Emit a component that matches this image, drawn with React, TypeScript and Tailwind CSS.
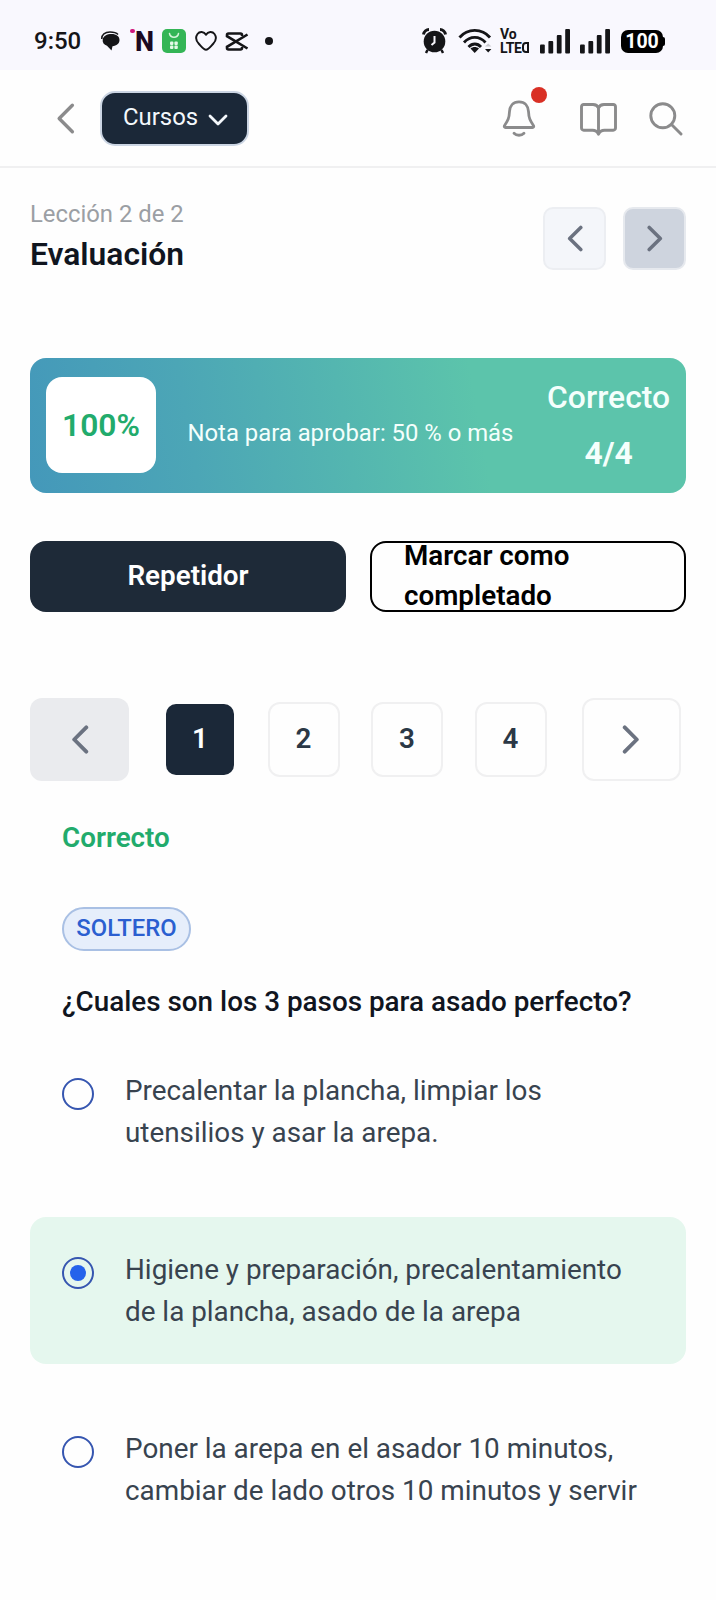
import clsx from 'clsx'

const options = [
  { id: 1, lines: ['Precalentar la plancha, limpiar los', 'utensilios y asar la arepa.'] },
  { id: 2, lines: ['Higiene y preparación, precalentamiento', 'de la plancha, asado de la arepa'] },
  { id: 3, lines: ['Poner la arepa en el asador 10 minutos,', 'cambiar de lado otros 10 minutos y servir'] },
]

const selectedId = 2
const pages = [1, 2, 3, 4]
const currentPage = 1

type ChevronProps = { dir: 'left' | 'right'; className?: string; strokeWidth?: number }

function Chevron({ dir, className, strokeWidth = 4 }: ChevronProps) {
  return (
    <svg viewBox="0 0 18 30" fill="none" stroke="currentColor" strokeWidth={strokeWidth} strokeLinecap="round" strokeLinejoin="round" className={className}>
      <path d={dir === 'left' ? 'M15.5 2.5 3 15l12.5 12.5' : 'M2.5 2.5 15 15 2.5 27.5'} />
    </svg>
  )
}

function Signal() {
  return (
    <svg width="30" height="25" viewBox="0 0 30 25" fill="#151518">
      <rect x="0" y="15.5" width="4.8" height="9" rx="1" />
      <rect x="8.4" y="12" width="4.8" height="12.5" rx="1" />
      <rect x="16.8" y="6" width="4.8" height="18.5" rx="1" />
      <rect x="25.2" y="0" width="4.8" height="24.5" rx="1" />
    </svg>
  )
}

function StatusBar() {
  return (
    <div className="flex h-[70px] items-center bg-[#f9f8fe] pt-[12px] pl-[34px] text-[#151518]">
      <span className="w-[67px] text-[24px] leading-7 font-medium">9:50</span>
      {/* chat */}
      <svg width="19" height="20" viewBox="0 0 19 20" fill="#151518">
        <path d="M.8 8C.5 3.500 4 1 9 1c3.500 0 6.500.8 8 2.500" fill="none" stroke="#151518" strokeWidth="1.500" />
        <path d="M10.500 3C15.500 3 18.500 5.500 18.500 9s-3 5.800-7 6.200L10.500 19.500 6 14.800C3 13.800 1.200 11.500 1.700 8.500 2.200 5 6 3 10.500 3Z" />
      </svg>
      <div className="relative ml-[15px] w-[20px]">
        <span className="absolute top-[2px] -left-[5px] h-[4px] w-[5px] rounded-sm bg-[#d0187c]" />
        <span className="block pt-px text-[27px] leading-7 font-extrabold text-[#1c0a22]">N</span>
      </div>
      <svg width="24" height="24" viewBox="0 0 24 24" className="ml-[7px]">
        <rect width="24" height="24" rx="5" fill="#34b556" />
        <path d="M7.500 4.500c1 5 8 5 9 0" fill="none" stroke="#d7f5dc" strokeWidth="1.500" strokeLinecap="round" />
        <g fill="#e4f9e7">
          <rect x="8" y="12.500" width="3.400" height="3.400" rx="1" />
          <rect x="12.400" y="12.500" width="3.400" height="3.400" rx="1" />
          <rect x="8" y="16.600" width="3.400" height="3.400" rx="1" />
          <rect x="12.400" y="16.600" width="3.400" height="3.400" rx="1" />
        </g>
      </svg>
      <svg width="22" height="20" viewBox="0 0 22 20" fill="none" stroke="#151518" strokeWidth="1.900" strokeLinejoin="round" className="ml-[9px]">
        <path d="M11 3.800C9 .2 4.500.2 2.500 3 .2 6.200 1.200 10 4 13c2.200 2.400 4.600 5.800 7 5.800s4.800-3.400 7-5.800c2.800-3 3.800-6.800 1.500-10C17.500.2 13 .2 11 3.800Z" />
      </svg>
      {/* video editor */}
      <svg width="24" height="19" viewBox="0 0 24 19" fill="none" stroke="#151518" strokeWidth="2.600" className="ml-[8px]">
        <path d="M17 4V3a1.500 1.500 0 0 0-1.500-1.500h-12A1.500 1.500 0 0 0 2 3v1.200L22.500 16.500" />
        <path d="M17 15v1a1.500 1.500 0 0 1-1.500 1.500h-12A1.500 1.500 0 0 1 2 16v-1.200L22.500 2.500" />
      </svg>
      <span className="ml-[16px] size-[8px] rounded-full bg-[#151518]" />

      {/* alarm */}
      <svg width="25" height="26" viewBox="0 0 25 26" className="ml-[149px]">
        <circle cx="12.500" cy="13.500" r="10.800" fill="#151518" />
        <path d="M1.500 6.500C2 3.500 4.500 1.500 7 1.500M23.500 6.500c-.5-3-3-5-5.500-5" stroke="#151518" strokeWidth="3" fill="none" />
        <path d="M5.500 22 4 25M19.500 22l1.500 3" stroke="#151518" strokeWidth="2.500" />
        <path d="M12.500 8v6.500L9.500 17" stroke="#f9f8fe" strokeWidth="2" fill="none" />
      </svg>
      {/* wifi */}
      <svg width="34" height="26" viewBox="0 0 34 26" fill="none" stroke="#151518" strokeWidth="2.800" className="ml-[11px]">
        <path d="M1.500 9.500c8-9.500 22.500-9.500 30.500 0" />
        <path d="M6 14.500c6-6.800 15.500-6.800 21.500 0" />
        <path d="M10.500 19c3.800-4 9-4 12.500 0" />
        <path d="m12.500 20.500 4.200 4.500 4.300-4.500c-2.500-2-6-2-8.500 0Z" fill="#151518" stroke="none" />
        <path d="m27 21 3.200 3.600 3.200-3.600Z" fill="#151518" stroke="none" />
        <path d="m27 18.500 3.200-3 3.200 3Z" fill="#c9c9cf" stroke="none" />
      </svg>
      <div className="ml-[8px] w-[32px] text-[14px] font-bold whitespace-nowrap">
        <div className="h-[13px] leading-[13px]">Vo</div>
        <div className="flex h-[14px] items-center leading-[14px] tracking-[-0.300px]">
          LTE
          <span className="h-[11px] w-[7px] rounded-l-sm border-[2px] border-[#151518]" />
        </div>
      </div>
      <div className="ml-[8px] flex gap-[10px]">
        <Signal />
        <Signal />
      </div>
      <div className="ml-[11px] flex items-center">
        <span className="flex h-[23px] w-[42px] items-center justify-center rounded-[7px] bg-black pt-[2px] text-[19.500px] font-bold text-white">100</span>
        <span className="h-[9px] w-[2px] rounded-r bg-black" />
      </div>
    </div>
  )
}

function Header() {
  return (
    <header className="flex h-[98px] items-center border-b-2 border-[#f0f0f1] pl-[56px] text-[#8b8b8c]">
      <Chevron dir="left" strokeWidth={3.2} className="mt-px h-[33px] w-[19px]" />
      <button className="ml-[25px] flex h-[55px] w-[149px] items-center rounded-[15px] border-2 border-[#cbd5e3] bg-[#1b2838] pl-[21px] text-[23.900px] text-[#f4f8fc]">
        Cursos
        <svg width="20" height="12" viewBox="0 0 20 12" fill="none" stroke="currentColor" strokeWidth="2.800" strokeLinecap="round" strokeLinejoin="round" className="mt-[3px] ml-[10px]">
          <path d="m2 2 8 8 8-8" />
        </svg>
      </button>
      <div className="relative ml-[253px]">
        <svg width="34" height="38" viewBox="0 0 34 38" fill="none" stroke="currentColor" strokeWidth="2.800" strokeLinecap="round" strokeLinejoin="round">
          <path d="M17 2.800C11 2.800 7.800 7 7.500 12.500 7.200 19 6 21.500 2.600 26.500c-.7 1.100-.2 2 .9 2h27c1.100 0 1.600-.9.9-2C28 21.500 26.800 19 26.500 12.500 26.200 7 23 2.800 17 2.800Z" />
          <path d="M12 34.300c2.500 2.600 7.500 2.600 10 0" />
        </svg>
        <span className="absolute -top-[12px] left-[29px] size-[16px] rounded-full bg-[#d93025]" />
      </div>
      <svg width="38" height="36" viewBox="0 0 38 36" fill="none" stroke="currentColor" strokeWidth="2.900" strokeLinecap="round" strokeLinejoin="round" className="mt-[3px] ml-[43px]">
        <path d="M19.500 6c-1-2.500-3-3.500-5.500-3.500H4.700A2.200 2.200 0 0 0 2.500 4.700V26a2.200 2.200 0 0 0 2.200 2.200h8.800c3 0 5 1.500 6 4 1-2.500 3-4 6-4h8.800a2.200 2.200 0 0 0 2.200-2.200V4.700a2.200 2.200 0 0 0-2.200-2.200H25c-2.500 0-4.500 1-5.500 3.500v26" />
      </svg>
      <svg width="34" height="34" viewBox="0 0 34 34" fill="none" stroke="currentColor" strokeWidth="2.900" strokeLinecap="round" className="mt-[2px] ml-[32px]">
        <circle cx="13.800" cy="13.800" r="12" />
        <path d="m22.500 22.500 9.500 9.500" />
      </svg>
    </header>
  )
}

function ResultBanner() {
  return (
    <div className="mt-[82px] flex h-[135px] items-center rounded-[16px] bg-[linear-gradient(80deg,#4498ba_0%,#4ca6b6_25%,#54b6b0_48%,#5cc4ab_68%,#5cc4ab_100%)] pb-[2px] pl-[16px] text-[#f4fffc]">
      <div className="flex h-[96px] w-[110px] items-center justify-center rounded-[16px] bg-white text-[31.800px] leading-[48px] font-semibold text-[#22ab6c]">
        100%
      </div>
      <span className="mt-[16px] ml-[31.500px] text-[23.850px] leading-9 whitespace-nowrap">Nota para aprobar: 50 % o más</span>
      <div className="mr-[16px] ml-auto text-center text-[31.800px] leading-[56px] font-medium">
        <div>Correcto</div>
        <div className="font-bold">4/4</div>
      </div>
    </div>
  )
}

function Pagination() {
  return (
    <nav className="mt-[86px] flex h-[83px] items-center text-[#6b7280]">
      <button className="flex h-full w-[99px] items-center justify-center rounded-[12px] bg-[#eaebee]">
        <Chevron dir="left" className="h-[29px] w-[18px]" />
      </button>
      <div className="ml-[35px] flex gap-[31.500px]">
        {pages.map((p) => (
          <button
            key={p}
            className={clsx(
              'flex h-[75px] w-[72px] items-center justify-center rounded-[12px] border-2 bg-clip-padding pb-[2px] text-[27.800px] font-semibold',
              p === currentPage ? 'border-transparent bg-[#1b2838] text-white' : 'border-[#f0f0f1] text-[#2b3846]',
            )}
          >
            {p}
          </button>
        ))}
      </div>
      <button className="ml-[35px] flex h-full w-[99px] items-center justify-center rounded-[12px] border-2 border-[#f0f0f1]">
        <Chevron dir="right" className="h-[29px] w-[18px]" />
      </button>
    </nav>
  )
}

function Radio({ checked }: { checked: boolean }) {
  return (
    <span className="mt-[8px] flex size-[32px] shrink-0 items-center justify-center rounded-full border-2 border-[#3656b0]">
      {checked && <span className="size-[16px] rounded-full bg-[#2563eb]" />}
    </span>
  )
}

export default function App() {
  return (
    <div className="h-[1600px] w-[716px] overflow-hidden bg-[#fefefe] font-['Roboto',sans-serif]">
      <StatusBar />
      <Header />

      <main className="px-[30px] pt-[28px]">
        <div className="flex justify-between">
          <div>
            <p className="text-[23.850px] leading-9 text-[#9b9fa4]">Lección 2 de 2</p>
            <h1 className="text-[31.800px] leading-[44px] font-semibold text-[#10151f]">Evaluación</h1>
          </div>
          <div className="mt-[11px] flex gap-[17px] text-[#6b7280]">
            <button className="flex size-[63px] items-center justify-center rounded-[10px] border-2 border-[#eceef2] bg-[#f4f6fa]">
              <Chevron dir="left" className="h-[27px] w-[16px]" />
            </button>
            <button className="flex size-[63px] items-center justify-center rounded-[10px] border-2 border-[#e6e9ee] bg-[#ced4de]">
              <Chevron dir="right" className="h-[27px] w-[16px]" />
            </button>
          </div>
        </div>

        <ResultBanner />

        <div className="mt-[48px] grid grid-cols-2 gap-6 text-[27.800px] font-semibold">
          <button className="h-[71px] rounded-[16px] bg-[#1e2a38] pb-[2px] text-white">Repetidor</button>
          <button className="flex h-[71px] items-center rounded-[16px] border-2 border-black pb-[2px] pl-[32px] text-left leading-[39.700px] text-black">
            Marcar como
            <br />
            completado
          </button>
        </div>

        <Pagination />

        <section className="mt-[36px] pl-[32px]">
          <p className="text-[27.800px] leading-[42px] font-semibold text-[#22ab6c]">Correcto</p>
          <span className="mt-[48px] flex h-[44px] w-[129px] items-center justify-center rounded-full border-2 border-[#a9c0e4] bg-[#e6eefb] text-[23.850px] font-medium text-[#2b5fd0]">
            SOLTERO
          </span>
          <h2 className="mt-[30px] text-[27.850px] leading-[42px] font-medium text-[#10151f]">¿Cuales son los 3 pasos para asado perfecto?</h2>
        </section>

        <ul className="mt-[15px] flex flex-col gap-8">
          {options.map((o) => (
            <li
              key={o.id}
              className={clsx('flex h-[147px] gap-[31.500px] rounded-[16px] px-[31.500px] pt-8', o.id === selectedId && 'bg-[#e5f7ee]')}
            >
              <Radio checked={o.id === selectedId} />
              <p className="text-[27.850px] leading-[41.700px] whitespace-nowrap text-[#38434f]">
                {o.lines[0]}
                <br />
                {o.lines[1]}
              </p>
            </li>
          ))}
        </ul>
      </main>
    </div>
  )
}
